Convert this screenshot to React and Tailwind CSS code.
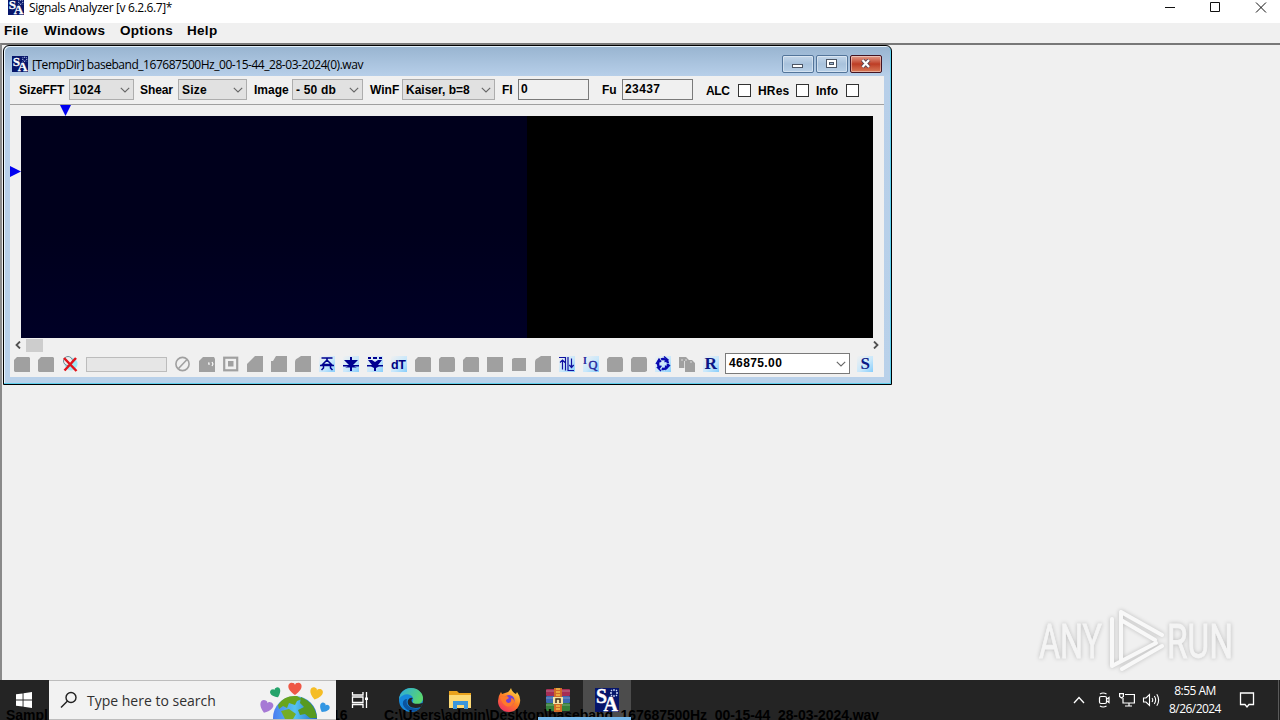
import React from 'react';

const labelFont = 'font-["Liberation_Sans",Arial,sans-serif] font-bold';
const segoe = 'font-["Open_Sans","Noto_Sans",sans-serif]';

function AppLogo({ className }) {
  return (
    <svg viewBox="0 0 24 24" className={className}>
      <rect width="24" height="24" fill="#07166b" />
      <g fill="#fff" stroke="#fff" strokeWidth=".4" fontFamily="Liberation Serif, serif" fontWeight="bold">
        <text x="1" y="14.500" fontSize="20" textLength="11" lengthAdjust="spacingAndGlyphs">S</text>
        <text x="8.500" y="23" fontSize="20" textLength="14.500" lengthAdjust="spacingAndGlyphs">A</text>
      </g>
      <path d="M19 1v2M19 7v2M15 5h2M21 5h2M16 2l1 1M21 7l1 1M22 2l-1 1M17 7l-1 1" stroke="#c9d5f5" strokeWidth="1.3" />
    </svg>
  );
}

function Chevron({ className }) {
  return (
    <svg viewBox="0 0 10 6" className={className} fill="none" stroke="#666" strokeWidth="1.1">
      <path d="M.8 .8 5 5 9.2 .8" />
    </svg>
  );
}

function Label({ className, children }) {
  return <span className={`shrink-0 whitespace-nowrap ${className}`}>{children}</span>;
}

function Select({ className, children }) {
  return (
    <div className={`flex h-[21px] shrink-0 items-center justify-between whitespace-nowrap border border-[#adadad] bg-[#e1e1e1] pl-[3px] pr-[3px] pt-px ${className}`}>
      <span>{children}</span>
      <Chevron className="h-[6px] w-[10px]" />
    </div>
  );
}

function Field({ className, children }) {
  return (
    <div className={`h-[21px] shrink-0 border border-[#7a7a7a] bg-[#f0f0f0] pl-[2px] leading-[18px] ${className}`}>
      {children}
    </div>
  );
}

function CheckBox({ className }) {
  return <div className={`mt-[2px] size-[13px] shrink-0 border border-[#333] bg-white ${className}`} />;
}

function Toolbar() {
  return (
    <div className={`flex h-[29px] items-center border-b border-[#a0a0a0] pb-[2px] pl-[9px] text-[12px] text-black ${labelFont}`}>
      <Label className="w-[50px] pt-px tracking-[-0.1px]">SizeFFT</Label>
      <Select className="w-[65px] tracking-[0.3px]">1024</Select>
      <Label className="ml-[6px] w-[38px] pt-px tracking-[-0.1px]">Shear</Label>
      <Select className="w-[69px] tracking-[0.2px]">Size</Select>
      <Label className="ml-[7px] w-[38px] pt-px">Image</Label>
      <Select className="w-[71px] tracking-[0.2px]">- 50 db</Select>
      <Label className="ml-[7px] w-[32px] pt-px">WinF</Label>
      <Select className="w-[93px]">Kaiser, b=8</Select>
      <Label className="ml-[7px] w-[16px] pt-px tracking-[-0.2px]">Fl</Label>
      <Field className="w-[71px]">0</Field>
      <Label className="ml-[13px] w-[20px] pt-px">Fu</Label>
      <Field className="w-[71px] tracking-[0.4px]">23437</Field>
      <Label className="ml-[13px] w-[32px] pt-[3px] tracking-[-0.4px]">ALC</Label>
      <CheckBox />
      <Label className="ml-[7px] w-[38px] pt-[3px] tracking-[0.2px]">HRes</Label>
      <CheckBox />
      <Label className="ml-[7px] w-[30px] pt-[3px]">Info</Label>
      <CheckBox />
    </div>
  );
}

// Greyed out buttons keep only the silhouette of their glyph
const disabledShapes = {
  folder: 'M0 4 3 1H15L16 2V16H1L0 15Z',
  slope: 'M0 8 8 0H16V16H0Z',
  step: 'M0 5H2L5 0H16V16H0Z',
  round: 'M0 6Q0 3 3 2L6 0H16V16H0Z',
  full: 'M0 1H16V16H0Z',
  soft: 'M0 3 2 1H15L16 3V15L14 16H1L0 15Z',
  small: 'M1 3 3 2H15V15H1Z',
};

function Glow() {
  return (
    <>
      <defs>
        <linearGradient id="glow" x1="0" y1="0" x2="1" y2="1">
          <stop offset="0" stopColor="#f0f0f0" />
          <stop offset="0.55" stopColor="#c9e8fb" />
          <stop offset="1" stopColor="#86cdfb" />
        </linearGradient>
      </defs>
      <rect width="16" height="16" fill="url(#glow)" />
    </>
  );
}

const glyphs = {
  remove: (
    <>
      <circle cx="9" cy="8" r="6.5" fill="#9eeaf6" />
      <circle cx="6" cy="5" r="4.5" fill="#eee" stroke="#6b8e98" />
      <path d="M2 2 14.5 15M14 2 2.5 14.5" stroke="#e0141c" strokeWidth="2.5" />
    </>
  ),
  none: (
    <g fill="none" stroke="#a0a0a0" strokeWidth="1.6">
      <circle cx="7.5" cy="8" r="6.6" />
      <path d="M3.5 12.5 11.8 3.8" />
    </g>
  ),
  eject: (
    <path d="M2.500 2H13.500M8 2V4M8 4 3.500 8.500H12.500ZM1 9.500H15M4.500 10V12L2.500 14M11.500 10V12L13.500 14" fill="none" stroke="#000090" strokeWidth="1.5" />
  ),
  down: (
    <path d="M7 1H9V4H15L10 9H16V10.5H11L14 11.5H9V15H7V11.5H2L5 10.5H0V9H6L1 4H7Z" fill="#000090" />
  ),
  downDots: (
    <path d="M1 1H4V3H1ZM6 1H10V3H6ZM12 1H15V3H12ZM1 4H5L8 6 11 4H15L11 9H16V10.5H12L9 12V15H7V12L4 10.5H0V9H5Z" fill="#000090" />
  ),
  dt: <text x="0" y="13" fontSize="12.5" fontWeight="bold" fontFamily="Liberation Sans, sans-serif" fill="#000080" textLength="15">dT</text>,
  updown: (
    <path d="M0 1.500H6.500V14.500M1 6.500 3.500 4 6 6.500M3.500 4.500V13.500M9 1V14.500H15M12.500 2.500V12M10.300 9 12.500 11.500 14.700 9" fill="none" stroke="#1010a0" strokeWidth="1.2" />
  ),
  iq: (
    <g fill="#28289c" fontFamily="Liberation Serif, serif">
      <text x="0" y="8" fontSize="10" fontWeight="bold">I</text>
      <text x="5.500" y="13" fontSize="12.500" stroke="#28289c" strokeWidth=".4">Q</text>
    </g>
  ),
  cycle: (
    <g fill="none" stroke="#0808b0" strokeWidth="2.5">
      <circle cx="8" cy="8" r="5" strokeDasharray="9 1.47" />
      <path d="M9 .5 13 4 9.5 6M15 9 11 13 10.5 9.5M6 15 2.5 11.5 6.5 10M1 8 4 3 6 6" strokeWidth="1.4" />
    </g>
  ),
  r: <text x="1.500" y="13" fontSize="16" fontWeight="bold" fontFamily="Liberation Serif, serif" fill="#0b1787" textLength="12.500" lengthAdjust="spacingAndGlyphs">R</text>,
  s: <text x="3.500" y="13" fontSize="16" fontWeight="bold" fontFamily="Liberation Serif, serif" fill="#0b1787" textLength="9.500" lengthAdjust="spacingAndGlyphs">S</text>,
};

const glowing = ['eject', 'down', 'downDots', 'dt', 'updown', 'iq', 'cycle', 'r', 's'];

function ToolGlyph({ name }) {
  return (
    <div className="flex w-6 shrink-0 justify-center">
      <svg viewBox="0 0 16 16" className="size-4">
        {glowing.includes(name) && <Glow />}
        {glyphs[name]}
        {disabledShapes[name] && <path d={disabledShapes[name]} fill="#a0a0a0" />}
        {name === 'tag' && (
          <>
            <path d="M0 5 4 1H15L16 3V16H0Z" fill="#a0a0a0" />
            <path d="M9 7h1v2M13 6l1 2-1 2" fill="none" stroke="#fff" strokeWidth="1.1" />
          </>
        )}
        {name === 'target' && (
          <>
            <rect x="1.2" y="1.7" width="13" height="12.6" fill="#f0f0f0" stroke="#a0a0a0" strokeWidth="2.2" />
            <rect x="5" y="5" width="5.5" height="5.5" fill="#a0a0a0" />
          </>
        )}
        {name === 'copy' && (
          <>
            <path d="M0 1H7L10 4H13L16 7V16H6V12H0Z" fill="#a0a0a0" />
            <path d="M5.500 5V12M7 3V5M12 5V7M3 3V5" stroke="#e8e8e8" strokeWidth=".8" />
          </>
        )}
      </svg>
    </div>
  );
}

const leftTools = ['folder', 'folder', 'remove'];
const rightTools = [
  'none', 'tag', 'target', 'slope', 'step', 'round', 'eject', 'down', 'downDots', 'dt', 'folder', 'soft',
  'folder', 'full', 'small', 'round', 'updown', 'iq', 'soft', 'soft', 'cycle', 'copy', 'r',
];

function ButtonBar() {
  return (
    <div className="flex h-[24px] items-center">
      {leftTools.map((name, i) => <ToolGlyph key={i} name={name} />)}
      <div className="ml-1 mr-[4px] h-[15px] w-[81px] shrink-0 border border-[#bcbcbc] bg-[#e6e6e6]" />
      {rightTools.map((name, i) => <ToolGlyph key={i} name={name} />)}
      <div className={`-mt-px ml-[2px] mr-[3px] flex h-[21px] w-[125px] shrink-0 items-center justify-between border border-[#7a7a7a] bg-white pl-[3px] pr-[3px] text-[12px] tracking-[0.4px] ${labelFont}`}>
        <span className="-mt-px">46875.00</span>
        <Chevron className="mt-px h-[6px] w-[10px]" />
      </div>
      <ToolGlyph name="s" />
    </div>
  );
}

function Spectrogram() {
  return (
    <div className="flex">
      <div className="w-[11px] pt-[50px]">
        <svg viewBox="0 0 11 11" className="h-[11px] w-[11px]">
          <path d="M0 0 11 5.500 0 11Z" fill="#0000f0" />
        </svg>
      </div>
      <div className="flex h-[222px] w-[852px]">
        <div className="w-[506px] bg-linear-to-b from-[#00001c] via-[#00001c] to-[#000026]" />
        <div className="flex-1 bg-black" />
      </div>
    </div>
  );
}

function CaptionButton({ className, children }) {
  return (
    <div className={`flex h-[18px] w-[32px] items-center justify-center rounded-[2px] border shadow-[inset_0_0_0_1px_rgba(255,255,255,0.4)] ${className}`}>
      {children}
    </div>
  );
}

function ChildWindow() {
  return (
    <div className="flex h-[340px] w-[889px] flex-col rounded-t-[6px] border border-black bg-linear-to-b from-[#98b4d0] from-[0px] via-[#b7cfe9] via-[30px] to-[#b9d1ea] p-px pt-0 shadow-[inset_-1px_-1px_0_#5fd0ee,inset_1px_1px_0_#e6f3fc]">
      <div className="flex h-[30px] shrink-0 items-center pl-[7px] pr-[8px] pt-[6px]">
        <AppLogo className="size-4" />
        <span className={`ml-1 flex-1 whitespace-nowrap pt-[2px] text-[12px] leading-4 tracking-[-0.46px] text-black ${segoe}`}>
          [TempDir] baseband_167687500Hz_00-15-44_28-03-2024(0).wav
        </span>
        <div className="flex gap-[2px]">
          <CaptionButton className="border-[#53759a] bg-linear-to-b from-[#c4d7ea] via-[#a8c2dc] to-[#b8d0e8]">
            <svg viewBox="0 0 12 10" className="h-[10px] w-[12px]">
              <rect x="0.500" y="5.500" width="10" height="3" fill="#fff" stroke="#4c5665" />
            </svg>
          </CaptionButton>
          <CaptionButton className="border-[#53759a] bg-linear-to-b from-[#c4d7ea] via-[#a8c2dc] to-[#b8d0e8]">
            <svg viewBox="0 0 12 10" className="h-[10px] w-[12px]">
              <rect x="0.500" y="0.500" width="10" height="8" fill="#fff" stroke="#4c5665" />
              <rect x="3.500" y="3.500" width="4" height="2" fill="#9fb9d3" stroke="#4c5665" />
            </svg>
          </CaptionButton>
          <CaptionButton className="border-[#431422] bg-linear-to-b from-[#e19a88] via-[#bd3c24] to-[#d77958]">
            <svg viewBox="0 0 12 10" className="h-[10px] w-[12px]">
              <path d="M2.500 1 9 8M9 1 2.500 8" stroke="#574452" strokeWidth="4" />
              <path d="M2.500 1 9 8M9 1 2.500 8" stroke="#fff" strokeWidth="2.2" />
            </svg>
          </CaptionButton>
        </div>
      </div>
      <div className="ml-[5px] h-[301px] w-[874px] shrink-0 bg-[#f0f0f0]">
        <Toolbar />
        <div className="h-[11px] pl-[50px]">
          <svg viewBox="0 0 11 11" className="h-[11px] w-[11px]">
            <path d="M0 0H11L5.500 11Z" fill="#0000f0" />
          </svg>
        </div>
        <Spectrogram />
        <div className="flex h-[14px] items-center pl-[5px] pr-[5px]">
          <svg viewBox="0 0 6 8" className="h-[8px] w-[6px]" fill="none" stroke="#505050" strokeWidth="1.8">
            <path d="M5 .5 1.500 4 5 7.500" />
          </svg>
          <div className="ml-[5px] h-[13px] w-[17px] bg-[#cdcdcd]" />
          <div className="flex-1" />
          <svg viewBox="0 0 6 8" className="h-[8px] w-[6px]" fill="none" stroke="#505050" strokeWidth="1.8">
            <path d="M1 .5 4.500 4 1 7.500" />
          </svg>
        </div>
        <ButtonBar />
      </div>
    </div>
  );
}

function Heart({ x, y, fill, s = 1, r = 0 }) {
  return (
    <path
      d="M0 5C-9-1-5-6-2-5 0-5 0-3 0-3 0-3 0-5 2-5 5-6 9-1 0 5Z"
      fill={fill}
      transform={`translate(${x} ${y}) rotate(${r}) scale(${s})`}
    />
  );
}

function EarthArt() {
  return (
    <svg viewBox="0 0 72 38" className="h-[38px] w-[72px]">
      <defs>
        <linearGradient id="sea" x1="0" y1="0" x2="1" y2="0">
          <stop offset="0" stopColor="#4a7df0" />
          <stop offset="0.5" stopColor="#55c3f3" />
          <stop offset="1" stopColor="#2268c9" />
        </linearGradient>
      </defs>
      <circle cx="37" cy="37" r="22" fill="url(#sea)" />
      <path d="M20 24Q26 14 39 15L44 18 39 20 37 24 31 22 29 27 25 25 21 28Z" fill="#68a51e" />
      <path d="M43 16Q57 22 59 37H52L47 33 42 34 40 29 46 26 42 22Z" fill="#579a20" />
      <path d="M23 30 31 28 38 33 35 38H27Z" fill="#75ad25" />
      <Heart x={8} y={26} fill="#a679d5" s={1.2} r={20} />
      <Heart x={18} y={12} fill="#25a36b" s={0.95} r={-25} />
      <Heart x={37} y={8} fill="#ef5846" s={1.2} />
      <Heart x={58} y={13} fill="#f5bd25" s={1.15} r={15} />
      <Heart x={66} y={27} fill="#3296e3" s={0.9} r={30} />
    </svg>
  );
}

function EdgeIcon() {
  return (
    <svg viewBox="0 0 24 24" className="size-6">
      <defs>
        <linearGradient id="edgeTop" x1="0" y1="0" x2="1" y2="0.4">
          <stop offset="0" stopColor="#2aa8e4" />
          <stop offset="1" stopColor="#59d66f" />
        </linearGradient>
      </defs>
      <circle cx="12" cy="12" r="12" fill="#1688dc" />
      <path d="M0 11C1 4 6 0 12 0 19 0 24 5 24 10 24 15 20 17 16 16 12 15 15 13 14 10 12 5 4 5 0 11Z" fill="url(#edgeTop)" />
      <path d="M8 11C6 18 12 22 21 20 18 24 10 25 6 20 2 16 4 11 8 11Z" fill="#0b539d" />
      <path d="M14 10C11 12 12 18 24 15L22 19C14 22 7 18 9 12Q11 9 14 10Z" fill="#242424" />
    </svg>
  );
}

function FolderIcon() {
  return (
    <svg viewBox="0 0 22 20" className="h-5 w-[22px]">
      <path d="M0 1H8L10 3H22V18H0Z" fill="#e9a21d" />
      <path d="M0 5H22V18H0Z" fill="#fcd975" />
      <path d="M4 11H19V19H15V15H8V19H4Z" fill="#3996dd" />
    </svg>
  );
}

function FirefoxIcon() {
  return (
    <svg viewBox="0 0 24 24" className="size-6">
      <defs>
        <linearGradient id="fox" x1="0.8" y1="0" x2="0.2" y2="1">
          <stop offset="0" stopColor="#ffe14a" />
          <stop offset="0.5" stopColor="#ff7b23" />
          <stop offset="1" stopColor="#f12e66" />
        </linearGradient>
      </defs>
      <path d="M14 0Q15 4 19 6L20 4Q24 9 23 14C22 20 18 24 12 24 5 24 1 19 1 13Q1 8 4 4L5 6 8 5Q12 5 14 0Z" fill="url(#fox)" />
      <circle cx="12" cy="12.500" r="5.500" fill="#7540d4" />
      <path d="M3 9 10 8 12 10 9 12Q9 15 12 15 15 14 14 10 18 11 17 15 14 20 9 18 5 16 3 9Z" fill="#ff792b" />
    </svg>
  );
}

function WinrarIcon() {
  return (
    <svg viewBox="0 0 24 24" className="size-6">
      <rect y="1" width="24" height="7" rx="1" fill="#a52d55" />
      <rect y="8" width="24" height="7" rx="1" fill="#3d68b2" />
      <rect y="15" width="24" height="8" rx="1" fill="#36813b" />
      <path d="M0 3H24M0 10H24M0 17H24" stroke="#ddd" strokeOpacity=".4" />
      <path d="M8 0H16V24H8Z" fill="#d06a28" />
      <path d="M10 1H14M10 4H14M10 7H14M10 18H14M10 21H14" stroke="#f0bd45" strokeWidth="1.5" />
      <rect x="7" y="9" width="10" height="7" fill="#f0e1a5" />
      <path d="M10 15V11H14V15" fill="none" stroke="#3c2b1b" strokeWidth="1.5" />
    </svg>
  );
}

function Taskbar() {
  return (
    <div className="relative flex h-10 shrink-0 items-stretch overflow-hidden bg-[#242424] text-white">
      <div className="flex w-[49px] items-center pl-4">
        <svg viewBox="0 0 16 16" className="size-4" fill="#fff">
          <path d="M0 2.300 6.600 1.400V7.500H0ZM7.500 1.200 16 0V7.500H7.500ZM0 8.400H6.600V14.600L0 13.700ZM7.500 8.400H16V16L7.500 14.800Z" />
        </svg>
      </div>
      <div className="z-10 flex w-[287px] items-center border-y border-[#bdbdbd] bg-[#f2f2f2] pl-[11px]">
        <svg viewBox="0 0 18 18" className="size-[18px]" fill="none" stroke="#202020" strokeWidth="1.4">
          <circle cx="11" cy="6.500" r="5" />
          <path d="M7.500 10 1 16.500" />
        </svg>
        <span className={`ml-[9px] flex-1 whitespace-nowrap text-[14px] text-[#303030] ${segoe}`}>
          Type here to search
        </span>
        <EarthArt />
        <div className="w-[6px]" />
      </div>
      <div className="flex w-[48px] items-center justify-center">
        <svg viewBox="0 0 18 16" className="h-4 w-[18px]" fill="none" stroke="#fff" strokeWidth="1.3">
          <path d="M1.500 0V3H12V0M1.500 16V12.500H12V16M1.500 5H12V10.500H1.500ZM15.500 0V16" />
          <path d="M14 5.500H17V8H14Z" fill="#fff" stroke="none" />
        </svg>
      </div>
      <div className="flex w-[53px] items-center justify-center"><EdgeIcon /></div>
      <div className="flex w-[46px] items-center justify-center"><FolderIcon /></div>
      <div className="flex w-[52px] items-center justify-center"><FirefoxIcon /></div>
      <div className="flex w-[48px] flex-col justify-between">
        <div className="flex h-[37px] items-center justify-center pr-[2px] pt-[3px]"><WinrarIcon /></div>
        <div className="z-10 ml-[3px] h-[3px] bg-[#76b9ed]" />
      </div>
      <div className="flex w-[48px] flex-col justify-between bg-[#4c4c4c]">
        <div className="z-10 flex h-[37px] items-center justify-center pt-[3px]"><AppLogo className="size-6" /></div>
        <div className="z-10 h-[3px] bg-[#76b9ed]" />
      </div>
      <div className="flex-1" />
      <div className="flex w-[87px] items-center">
        <svg viewBox="0 0 12 8" className="h-2 w-3" fill="none" stroke="#fff" strokeWidth="1.3">
          <path d="M1 7 6 1.500 11 7" />
        </svg>
        <svg viewBox="0 0 14 16" className="ml-[12px] h-4 w-[14px]" fill="none" stroke="#fff" strokeWidth="1.2">
          <rect x="2.500" y="4.500" width="7" height="7" rx="1.500" />
          <path d="M10 7 12 5.500V10.500L10 9M3 2Q6 0 9.500 2M3 14Q6 16 9.500 14" />
        </svg>
        <svg viewBox="0 0 16 16" className="ml-[8px] size-4" fill="none" stroke="#fff" strokeWidth="1.2">
          <path d="M6 2.500H15.400V11H4V6M10 11V14M6 14H13" />
          <path d="M.6 1.600H4.400V4.500L2.500 6 .6 4.500Z" />
        </svg>
        <svg viewBox="0 0 18 16" className="ml-[7px] h-4 w-[18px]" fill="none" stroke="#fff" strokeWidth="1.1">
          <path d="M1.500 6H4L7.500 2.500V13.500L4 10H1.500ZM10 6Q11.500 8 10 10M12.300 4Q15 8 12.300 12M14.800 2.200Q18.500 8 14.800 13.800" />
        </svg>
      </div>
      <div className={`flex w-[70px] flex-col items-center justify-center pb-px text-[12px] leading-[18px] tracking-[-0.55px] ${segoe}`}>
        <span>8:55 AM</span>
        <span>8/26/2024</span>
      </div>
      <div className="flex w-[48px] items-center pl-[9px]">
        <svg viewBox="0 0 16 18" className="h-[18px] w-4" fill="none" stroke="#fff" strokeWidth="1.3">
          <path d="M1.500 2H14.500V13.500H10L8 16 6 13.500H1.500Z" />
        </svg>
      </div>
      <div className="mr-px w-px bg-[#5a5a5a]" />
      {/* status line of the main window, showing through the translucent bar */}
      <div className={`absolute left-[6px] top-[28px] whitespace-nowrap text-[14px] leading-[15px] text-black ${labelFont}`}>Sampl</div>
      <div className={`absolute left-[332px] top-[28px] whitespace-nowrap text-[14px] leading-[15px] text-black ${labelFont}`}>16</div>
      <div className={`absolute left-[384px] top-[28px] whitespace-nowrap text-[14px] leading-[15px] tracking-[-0.07px] text-black ${labelFont}`}>
        C:\Users\admin\Desktop\baseband_167687500Hz_00-15-44_28-03-2024.wav
      </div>
    </div>
  );
}

function Watermark() {
  return (
    <div className="absolute left-[1036px] top-[604px] flex h-[72px] w-[200px] items-center">
      <svg viewBox="0 0 200 72" className="h-[72px] w-[200px] drop-shadow-[0_0_2px_rgba(0,0,0,0.22)]">
        <g fill="#f4f4f4" stroke="#f4f4f4" strokeWidth=".8" fontFamily="Roboto, sans-serif" fontSize="48">
          <text x="3" y="54" textLength="63" lengthAdjust="spacingAndGlyphs">ANY</text>
          <text x="131" y="54" textLength="66" lengthAdjust="spacingAndGlyphs">RUN</text>
        </g>
        <g fill="none" stroke="#f8f8f8" strokeWidth="4" strokeLinejoin="round" strokeLinecap="round">
          <path d="M76 15V62L120 39" />
          <path d="M126 31 85 8V56M85 16 119 36" />
          <path d="M86 65 126 42" />
        </g>
      </svg>
    </div>
  );
}

export default function App() {
  return (
    <div className="relative flex h-[720px] w-[1280px] flex-col overflow-hidden bg-[#f0f0f0]">
      <div className="flex h-[23px] shrink-0 items-start bg-white pl-2">
        <AppLogo className="-mt-px size-4" />
        <span className={`ml-[5px] flex-1 whitespace-nowrap text-[12px] leading-4 tracking-[-0.36px] text-black ${segoe}`}>
          Signals Analyzer [v 6.2.6.7]*
        </span>
        <svg viewBox="0 0 104 14" className="mr-[12px] h-[14px] w-[104px]" fill="none" stroke="#111" strokeWidth="1">
          <path d="M1 7.500H11M46.500 2.500H55.500V11.500H46.500ZM92 2.500 102 12.500M102 2.500 92 12.500" />
        </svg>
      </div>
      <div className={`flex h-5 shrink-0 items-center pb-[3px] pl-[4px] text-[13.5px] tracking-[0.3px] text-black ${labelFont}`}>
        <span className="w-[40px]">File</span>
        <span className="w-[76px]">Windows</span>
        <span className="w-[67px]">Options</span>
        <span>Help</span>
      </div>
      <div className="flex-1 border-l-2 border-t-2 border-l-[#8a8a8a] border-t-[#787878] pl-px">
        <ChildWindow />
      </div>
      <Watermark />
      <Taskbar />
    </div>
  );
}
